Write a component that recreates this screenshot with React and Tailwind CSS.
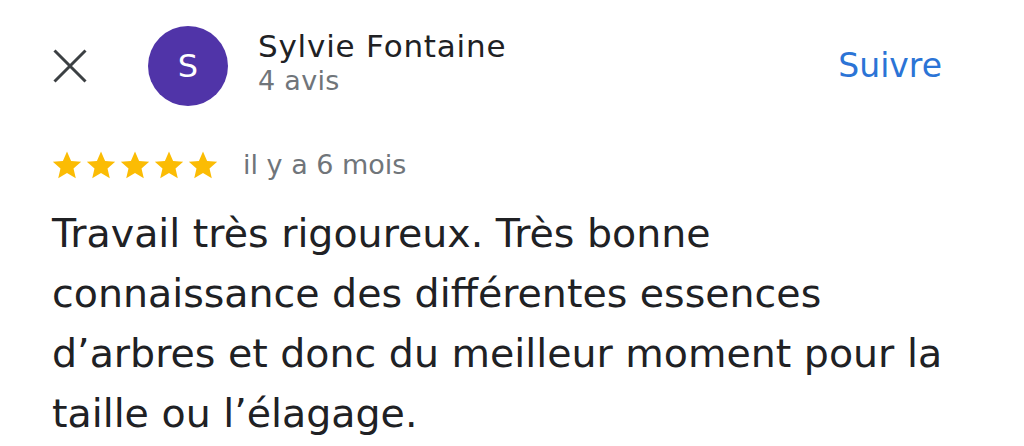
import React from "react";

const Star = () => (
  <svg viewBox="0 0 24 24" className="w-[34px] h-[34px]" fill="#fbbc04">
    <path d="M12 2.5l2.9 6.6 7.1.6-5.4 4.7 1.6 7-6.2-3.7-6.2 3.7 1.6-7L2 9.7l7.1-.6z" />
  </svg>
);

const App = () => {
  const lines = [
    "Travail très rigoureux. Très bonne",
    "connaissance des différentes essences",
    "d’arbres et donc du meilleur moment pour la",
    "taille ou l’élagage.",
  ];

  return (
    <div
      className="w-[1024px] h-[446px] bg-white overflow-hidden"
      style={{ fontFamily: "'DejaVu Sans', sans-serif" }}
    >
      {/* header */}
      <div className="flex items-start pt-[26px] pl-[53px] pr-[82px]">
        <svg viewBox="0 0 34 34" className="w-[34px] h-[34px] mt-[23px] shrink-0" fill="none" stroke="#3c4043" strokeWidth="3">
          <path d="M1.5 1.5l31 31M32.5 1.5l-31 31" />
        </svg>
        <div className="ml-[61px] w-[80px] h-[80px] shrink-0 rounded-full bg-[#5034a8] flex items-center justify-center text-white text-[32px]">
          S
        </div>
        <div className="ml-[30px] flex-1 mt-[2px]">
          <div className="text-[31px] leading-[37px] tracking-[0.8px] text-[#202124]">Sylvie Fontaine</div>
          <div className="text-[27px] leading-[32px] tracking-[0.3px] text-[#70757a]">4 avis</div>
        </div>
        <div className="mt-[20px] text-[33px] leading-[40px] text-[#2b74d6]">Suivre</div>
      </div>

      {/* rating */}
      <div className="flex items-center pl-[50px] mt-[42px] h-[34px]">
        <div className="flex">
          <Star />
          <Star />
          <Star />
          <Star />
          <Star />
        </div>
        <span className="ml-[23px] text-[27px] leading-[34px] text-[#70757a]">il y a 6 mois</span>
      </div>

      {/* review */}
      <div className="pl-[52px] mt-[21px] text-[39.5px] leading-[60px] text-[#202124]">
        {lines.map((l) => (
          <div key={l} className="whitespace-nowrap">
            {l}
          </div>
        ))}
      </div>
    </div>
  );
};

export default App;
